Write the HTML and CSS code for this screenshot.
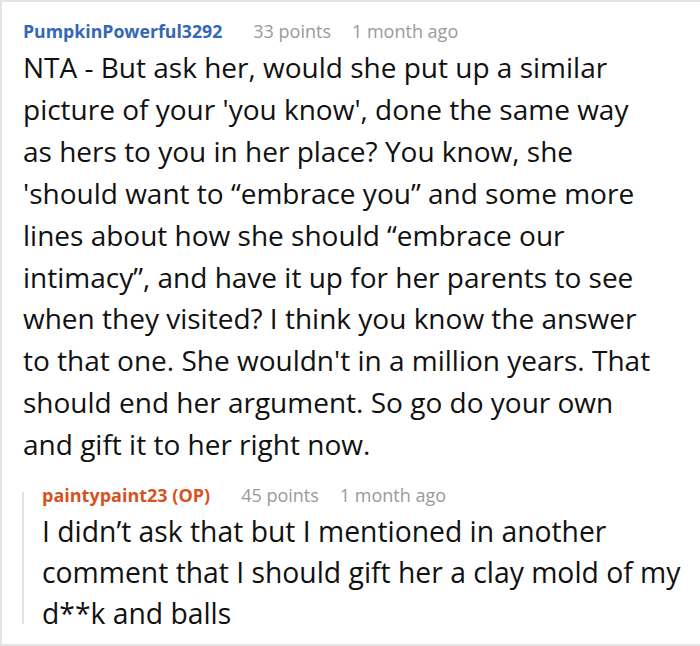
FILE: index.html
```html
<!DOCTYPE html>
<html>
<head>
<meta charset="utf-8">
<link rel="stylesheet" href="styles.css">
</head>
<body>
<div class="card">
  <div class="comment">
    <div class="meta">
      <span class="user">PumpkinPowerful3292</span>
      <span class="points">33 points</span>
      <span class="time">1 month ago</span>
    </div>
    <p class="text">NTA - But ask her, would she put up a similar<br>picture of your 'you know', done the same way<br>as hers to you in her place? You know, she<br>'should want to “embrace you” and some more<br>lines about how she should “embrace our<br>intimacy”, and have it up for her parents to see<br>when they visited? I think you know the answer<br>to that one. She wouldn't in a million years. That<br>should end her argument. So go do your own<br>and gift it to her right now.</p>
  </div>
  <div class="reply">
    <div class="bar"></div>
    <div class="reply-body">
      <div class="meta">
        <span class="user op">paintypaint23 (OP)</span>
        <span class="points">45 points</span>
        <span class="time">1 month ago</span>
      </div>
      <p class="text reply-text">I didn’t ask that but I mentioned in another comment that I should gift her a clay mold of my d**k and balls</p>
    </div>
  </div>
</div>
</body>
</html>
```
FILE: styles.css
```css
html, body {
  margin: 0;
  padding: 0;
  background: #fff;
}
.card {
  box-sizing: border-box;
  width: 700px;
  height: 646px;
  border: 2px solid #e4e4e4;
  border-right: none;
  padding: 17px 0 0 20px;
  font-family: "Open Sans", sans-serif;
  color: #111;
  overflow: hidden;
}
.comment {
  padding-left: 1px;
  width: 676px;
}
.meta {
  display: flex;
  align-items: baseline;
  font-size: 18px;
  line-height: 24px;
  color: #9a9a9a;
  white-space: nowrap;
}
.user {
  font-weight: 700;
  font-size: 17.7px;
  color: #3568b4;
  margin-right: 31px;
}
.user.op {
  font-size: 18px;
  color: #d6531d;
}
.points {
  margin-right: 21px;
}
.text {
  margin: 4px 0 0 0;
  font-size: 28px;
  line-height: 41.9px;
}
.reply {
  display: flex;
  margin-top: 17px;
}
.bar {
  width: 2px;
  flex: none;
  background: #e2e2e2;
  margin: 9px 0 10px 0;
}
.reply-body {
  padding-left: 18px;
  flex: 1;
}
.reply-text {
  margin-top: 4px;
  font-size: 28.3px;
  line-height: 41px;
}
```
